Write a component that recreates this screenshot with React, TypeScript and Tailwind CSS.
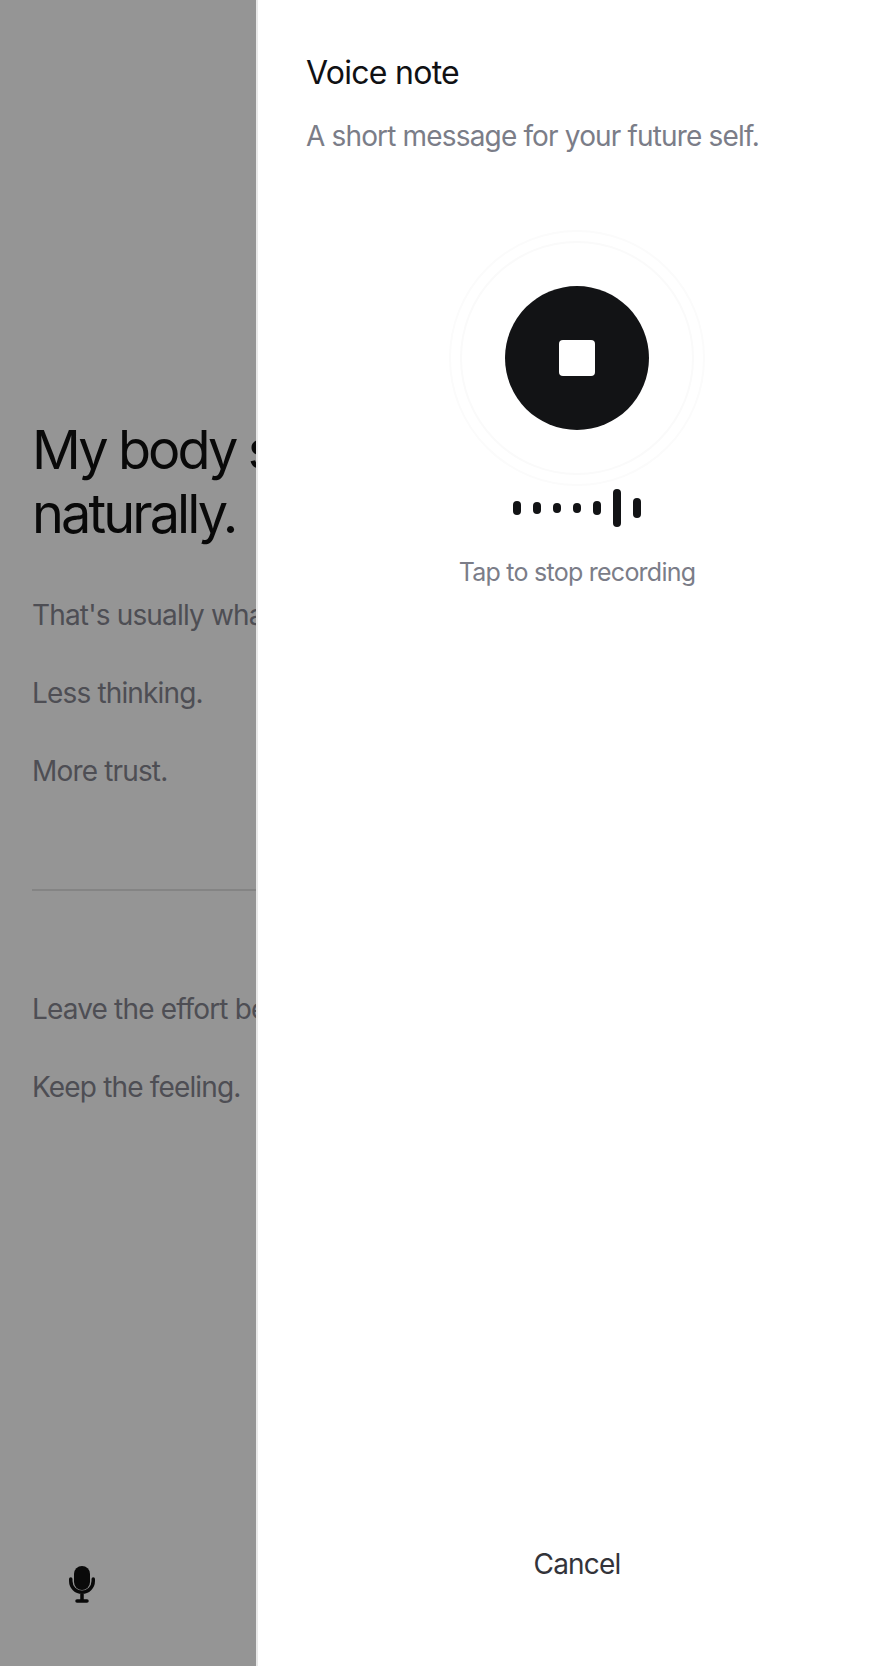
export default function App() {
  const bars = [14, 12, 10, 10, 14, 38, 20];
  return (
    <div className="relative h-[1666px] w-full overflow-hidden bg-[#f9f9f9] font-['Inter',sans-serif]">
      <main className="flex h-full flex-col px-8 pt-[418px] text-[#82838d] tracking-[-0.84px]">
        <h1 className="text-[54px] leading-[64px] tracking-[-2.9px] text-[#101010] whitespace-nowrap">My body settles<br />naturally.</h1>
        <p className="mt-[49px] text-[28px] leading-[40px]">That's usually what happens.</p>
        <p className="mt-[38px] text-[28px] leading-[40px]">Less thinking.</p>
        <p className="mt-[38px] text-[28px] leading-[40px]">More trust.</p>
        <div className="mt-[98px] h-[2px] w-full bg-[#dcdcdc]" />
        <p className="mt-[98px] text-[28px] leading-[40px] whitespace-nowrap">Leave the effort behind.</p>
        <p className="mt-[38px] text-[28px] leading-[40px]">Keep the feeling.</p>
      </main>
      <svg className="absolute left-[69px] top-[1566px] h-[37px] w-[26px]" viewBox="0 0 26 37" fill="none">
        <rect x="5" y="0" width="16" height="24" rx="8" fill="#111" />
        <path d="M1.75 13v2a11.25 11.25 0 0 0 22.5 0v-2M13 27v8M8 35h10" stroke="#111" strokeWidth="3.5" strokeLinecap="round" />
      </svg>
      <div className="absolute inset-0 bg-black/40" />
      <aside className="absolute inset-y-0 left-[256px] right-0 flex flex-col border-l-2 border-[#e8e8e8] bg-white pl-[48px] pr-[44px]">
        <h2 className="mt-[53px] text-[32px] leading-[40px] tracking-[-0.72px] text-[#101114]">Voice note</h2>
        <p className="mt-[23px] text-[28px] leading-[40px] tracking-[-0.84px] text-[#7b7d88]">A short message for your future self.</p>
        <div className="relative mt-[74px] flex h-[256px] items-center justify-center">
          <div className="absolute h-[256px] w-[256px] rounded-full border-2 border-[#fbfbfb]" />
          <div className="absolute h-[234px] w-[234px] rounded-full border-2 border-[#fafafa]" />
          <div className="flex h-[144px] w-[144px] items-center justify-center rounded-full bg-[#121315]">
            <div className="h-[36px] w-[36px] rounded-[4px] bg-white" />
          </div>
        </div>
        <div className="mt-[3px] flex h-[38px] items-center justify-center gap-3">
          {bars.map((h, i) => (
            <div key={i} className="w-2 rounded-full bg-[#121315]" style={{ height: h }} />
          ))}
        </div>
        <p className="mt-[27px] text-center text-[25px] leading-[36px] tracking-[-0.75px] text-[#7b7d88]">Tap to stop recording</p>
        <button className="mt-auto mb-[82px] text-center text-[28px] leading-[40px] tracking-[-0.84px] text-[#33343a]">Cancel</button>
      </aside>
    </div>
  );
}
